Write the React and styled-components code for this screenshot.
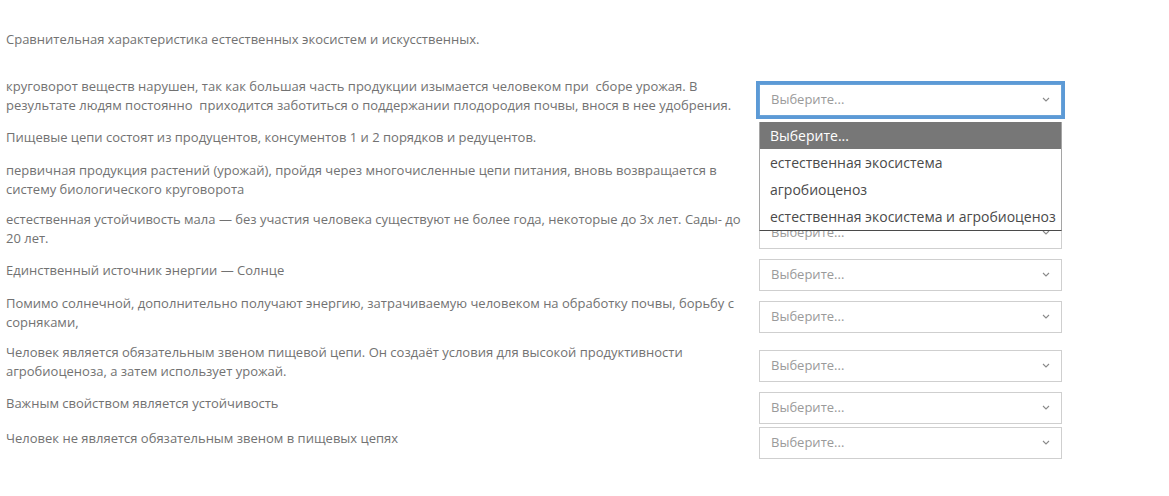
import styled, { createGlobalStyle } from "styled-components";

const GlobalStyle = createGlobalStyle`
  body {
    margin: 0;
    background: #fff;
    font-family: "Open Sans", "Liberation Sans", sans-serif;
  }
`;

const Page = styled.main`
  padding: 30px 0 0 6px;
  color: #727272;
  font-size: 13px;
  line-height: 19.5px;
`;

const Title = styled.p`
  margin: 0 0 24px;
`;

const List = styled.div`
  display: flex;
  flex-direction: column;
`;

const Row = styled.div`
  display: flex;
  align-items: center;
  gap: 13px;
`;

const Text = styled.p`
  flex: 0 0 740px;
  margin: 0;
  padding: 3px 0 7px;
`;

const SelectWrap = styled.div`
  position: relative;
  flex: 0 0 303px;
  margin-top: 3px;
`;

const SelectBox = styled.div`
  box-sizing: border-box;
  height: 32px;
  display: flex;
  align-items: center;
  justify-content: space-between;
  padding: 0 11px;
  border: 1px solid ${(p) => (p.$focused ? "#6aa3d8" : "#cfcfcf")};
  box-shadow: ${(p) => (p.$focused ? "0 0 0 3px #5c9ad6" : "none")};
  background: #fff;
  color: #9a9a9a;
  font-size: 13px;
`;

/* native-looking option list dropped under the focused select */
const Menu = styled.ul`
  position: absolute;
  z-index: 2;
  top: 38px;
  left: 0;
  right: 0;
  margin: 0;
  padding: 0;
  list-style: none;
  background: #fff;
  border: 1px solid #a5a5a5;
  border-top: none;
  border-bottom-color: #4a4a4a;
`;

const Option = styled.li`
  box-sizing: border-box;
  height: 27px;
  display: flex;
  align-items: center;
  padding: 2px 10px 0;
  font-size: 14px;
  white-space: nowrap;
  color: ${(p) => (p.$active ? "#fff" : "#4a4a4a")};
  background: ${(p) => (p.$active ? "#777" : "transparent")};
`;

const Chevron = () => (
  <svg width="8" height="5" viewBox="0 0 8 5" fill="none">
    <polyline points="1,1 4,4 7,1" stroke="#8a8a8a" strokeWidth="1.1" />
  </svg>
);

const options = [
  "Выберите...",
  "естественная экосистема",
  "агробиоценоз",
  "естественная экосистема и агробиоценоз",
];

const items = [
  "круговорот веществ нарушен, так как большая часть продукции изымается человеком при\u00a0 сборе урожая. В результате людям постоянно\u00a0 приходится заботиться о поддержании плодородия почвы, внося в нее удобрения.",
  "Пищевые цепи состоят из продуцентов, консументов 1 и 2 порядков и редуцентов.",
  "первичная продукция растений (урожай), пройдя через многочисленные цепи питания, вновь возвращается в систему биологического круговорота",
  "естественная устойчивость мала — без участия человека существуют не более года, некоторые до 3х лет. Сады- до 20 лет.",
  "Единственный источник энергии — Солнце",
  "Помимо солнечной, дополнительно получают энергию, затрачиваемую человеком на обработку почвы, борьбу с сорняками,",
  "Человек является обязательным звеном пищевой цепи. Он создаёт условия для высокой продуктивности агробиоценоза, а затем использует урожай.",
  "Важным свойством является устойчивость",
  "Человек не является обязательным звеном в пищевых цепях",
];

function Select({ open }) {
  return (
    <SelectWrap>
      <SelectBox $focused={open}>
        <span>Выберите...</span>
        <Chevron />
      </SelectBox>
      {open && (
        <Menu>
          {options.map((o, i) => (
            <Option key={o} $active={i === 0}>
              {o}
            </Option>
          ))}
        </Menu>
      )}
    </SelectWrap>
  );
}

export default function App() {
  return (
    <>
      <GlobalStyle />
      <Page>
        <Title>Сравнительная характеристика естественных экосистем и искусственных.</Title>
        <List>
          {items.map((t, i) => (
            <Row key={i}>
              <Text>{t}</Text>
              <Select open={i === 0} />
            </Row>
          ))}
        </List>
      </Page>
    </>
  );
}
